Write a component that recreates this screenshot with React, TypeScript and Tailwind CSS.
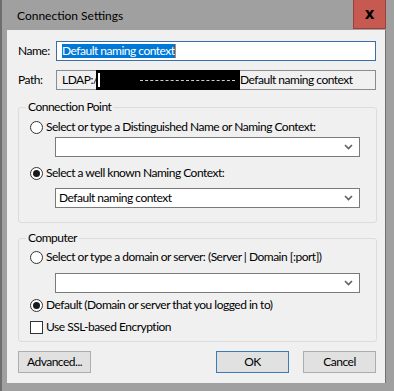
import React from "react";

const Chevron = () => (
  <svg width="9" height="6" viewBox="0 0 9 6" className="text-[#606060]">
    <path d="M1 1l3.5 3.5L8 1" fill="none" stroke="currentColor" strokeWidth="1.6" />
  </svg>
);

function Combo({ value }: { value?: string }) {
  return (
    <div className="ml-[25px] flex h-[20px] w-[305px] items-center justify-between border border-[#7a7a7a] bg-white pl-[3px] pr-[6px]">
      <span>{value}</span>
      <Chevron />
    </div>
  );
}

function Radio({ checked, label }: { checked?: boolean; label: string }) {
  return (
    <div className="flex h-[16px] items-center gap-[3px]">
      <span className="flex h-[13px] w-[13px] items-center justify-center rounded-full border border-[#333] bg-white">
        {checked && <span className="h-[7px] w-[7px] rounded-full bg-[#1a1a1a]" />}
      </span>
      <span>{label}</span>
    </div>
  );
}

function Group({ title, children, className }: { title: string; children: React.ReactNode; className?: string }) {
  return (
    <fieldset className={`rounded-[3px] border border-[#dcdcdc] pl-[11px] pr-[14px] ${className ?? ""}`}>
      <legend className="ml-[-4px] px-[2px] leading-[14px]">{title}</legend>
      {children}
    </fieldset>
  );
}

export default function App() {
  return (
    <div className="flex h-[391px] w-[394px] flex-col border-l-2 border-[#6e6e6e] bg-[#a0a0a0] font-['Lato',sans-serif] text-[12px] tracking-[-0.5px] text-black">
      {/* Title bar */}
      <div className="flex h-[30px] shrink-0 items-start">
        <div className="ml-[15px] mt-[7px] flex-1 text-[12px] tracking-normal">Connection Settings</div>
        <div className="mr-[8px] flex h-[29px] w-[33px] items-center justify-center border-b border-l border-r border-[#9a3f3f] bg-[#c75a50] font-['DejaVu_Sans',sans-serif] text-[15px] font-bold tracking-normal text-black">
          x
        </div>
      </div>

      {/* Client area */}
      <div className="mb-[8px] ml-[5px] mr-[8px] flex flex-1 flex-col border-r border-[#707070] bg-[#f0f0f0] pb-[10px] pl-[11px] pr-[8px] pt-[11px]">
        <div className="flex h-[20px] items-center">
          <span className="w-[38px]">Name:</span>
          <div className="flex h-[20px] w-[320px] items-center border border-[#3b6ea5] bg-white pl-[5px]">
            <span className="bg-[#0078d7] leading-[14px] text-white">Default naming context</span>
            <span className="h-[14px] w-[1px] bg-[#e87b2c]" />
          </div>
        </div>

        <div className="mt-[9px] flex h-[20px] items-center">
          <span className="w-[38px]">Path:</span>
          <div className="flex h-[20px] w-[320px] items-center border border-[#8c8c8c] bg-[#f0f0f0] pl-[5px]">
            <span className="w-[34px]">LDAP:/</span>
            <span className="relative h-[20px] w-[144px] bg-black">
              <span className="absolute left-[2px] top-[3px] h-[14px] w-[2px] bg-white" />
              <span className="absolute left-[44px] top-[10px] h-[1px] w-[95px] border-t border-dashed border-[#cfcfcf]" />
            </span>
            <span>Default naming context</span>
          </div>
        </div>

        <Group title="Connection Point" className="mt-[10px] pb-[14px]">
          <div className="mt-[5px]">
            <Radio label="Select or type a Distinguished Name or Naming Context:" />
          </div>
          <div className="mt-[2px]">
            <Combo />
          </div>
          <div className="mt-[8px]">
            <Radio checked label="Select a well known Naming Context:" />
          </div>
          <div className="mt-[7px]">
            <Combo value="Default naming context" />
          </div>
        </Group>

        <Group title="Computer" className="mt-[8px] pb-[6px]">
          <div className="mt-[4px]">
            <Radio label="Select or type a domain or server: (Server | Domain [:port])" />
          </div>
          <div className="mt-[8px]">
            <Combo />
          </div>
          <div className="mt-[4px]">
            <Radio checked label="Default (Domain or server that you logged in to)" />
          </div>
          <div className="mt-[6px] flex h-[16px] items-center gap-[3px]">
            <span className="h-[13px] w-[13px] border border-[#333] bg-white" />
            <span>Use SSL-based Encryption</span>
          </div>
        </Group>

        <div className="mt-[9px] flex h-[22px]">
          <button className="w-[73px] border border-[#adadad] bg-[#e1e1e1]">Advanced...</button>
          <div className="flex-1" />
          <button className="w-[73px] border border-[#3d7ab8] bg-[#e1e1e1]">OK</button>
          <button className="ml-[14px] mr-[1px] w-[73px] border border-[#adadad] bg-[#e1e1e1]">Cancel</button>
        </div>
      </div>
    </div>
  );
}
